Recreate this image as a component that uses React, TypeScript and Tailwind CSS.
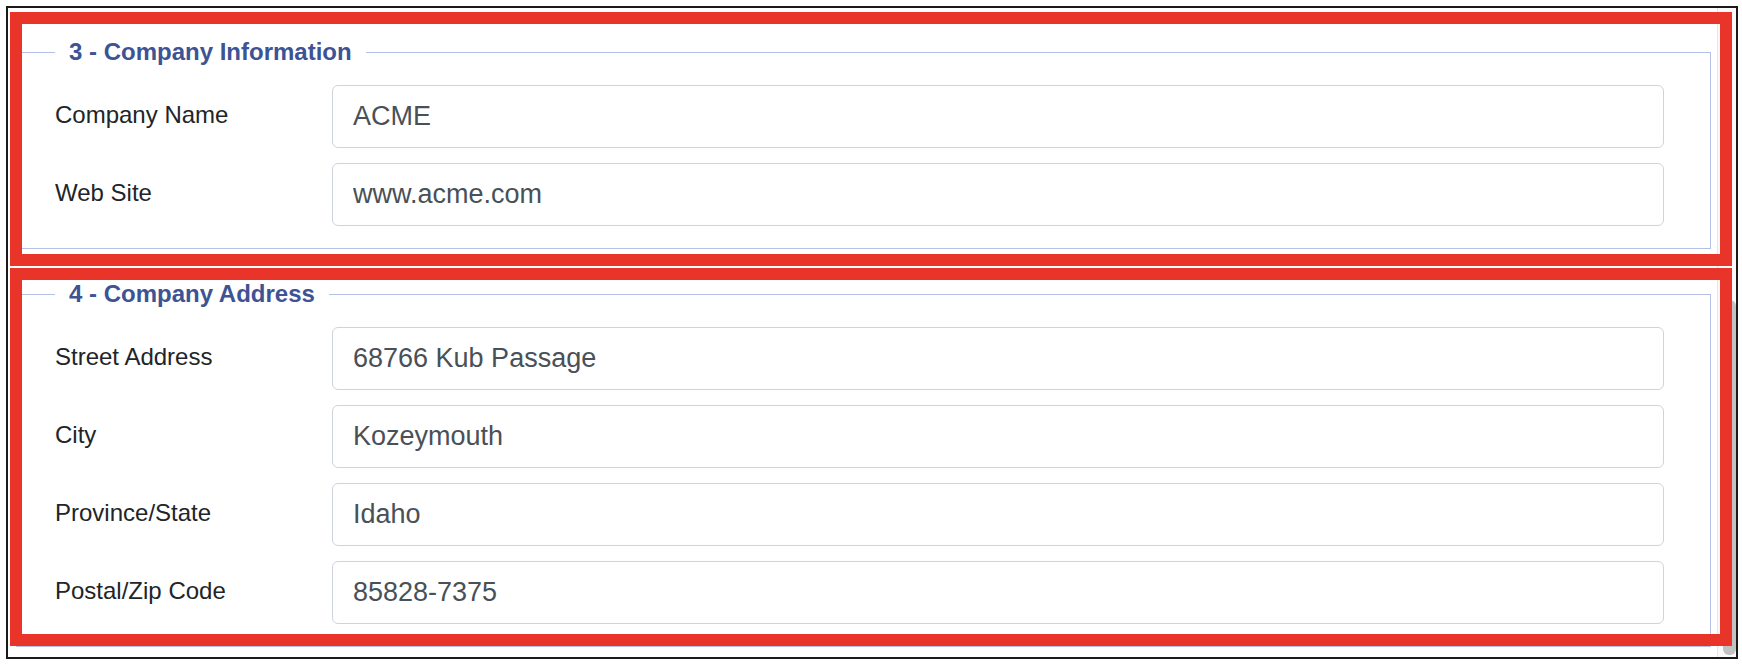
import React from "react";

interface FieldProps {
  label: string;
  value: string;
}

const Field = ({ label, value }: FieldProps) => {
  return (
    <div className="flex items-start">
      <label className="w-[277px] shrink-0 pt-[12px] text-[24px] leading-[36px] text-[#212529]">
        {label}
      </label>
      <input
        type="text"
        defaultValue={value}
        readOnly
        className="h-[63px] flex-1 min-w-0 rounded-[6px] border border-[#ced4da] bg-white px-[20px] text-[27px] text-[#495057] outline-none"
      />
    </div>
  );
};

interface SectionProps {
  title: string;
  fields: FieldProps[];
  className?: string;
}

const Section = ({ title, fields, className }: SectionProps) => {
  return (
    <fieldset
      className={
        "ml-[8px] mr-[6px] border border-[#b4c0e6] pl-[38px] pr-[46px] pt-[15px] pb-[22px] " +
        (className ?? "")
      }
    >
      <legend className="px-[14px] text-[24px] leading-[36px] font-bold text-[#3d5394]">
        {title}
      </legend>
      <div className="flex flex-col gap-[15px]">
        {fields.map((f) => (
          <Field key={f.label} label={f.label} value={f.value} />
        ))}
      </div>
    </fieldset>
  );
};

const companyInfo: FieldProps[] = [
  { label: "Company Name", value: "ACME" },
  { label: "Web Site", value: "www.acme.com" },
];

const companyAddress: FieldProps[] = [
  { label: "Street Address", value: "68766 Kub Passage" },
  { label: "City", value: "Kozeymouth" },
  { label: "Province/State", value: "Idaho" },
  { label: "Postal/Zip Code", value: "85828-7375" },
];

export default function App() {
  return (
    <div className="min-h-screen bg-white p-[6px] font-['Liberation_Sans',Arial,sans-serif]">
      <div className="relative flex h-[653px] w-[1732px] overflow-hidden border-2 border-[#1a1a1a] bg-white">
        {/* form content */}
        <div className="flex-1 pt-[26px]">
          <Section title="3 - Company Information" fields={companyInfo} />
          <Section title="4 - Company Address" fields={companyAddress} className="mt-[27px]" />
        </div>

        {/* scrollbar */}
        <div className="w-[19px] shrink-0 border-l border-[#e6e6e6] bg-[#fafafa]">
          <div className="ml-[5px] mt-[292px] h-[355px] w-[13px] rounded-[6px] bg-[#c2c2c2]" />
        </div>

        {/* red highlight boxes */}
        <div className="pointer-events-none absolute left-[2px] top-[4px] h-[254px] w-[1722px] border-[12px] border-[#e9342a]" />
        <div className="pointer-events-none absolute left-[2px] top-[260px] h-[378px] w-[1722px] border-[12px] border-[#e9342a]" />
      </div>
    </div>
  );
}
